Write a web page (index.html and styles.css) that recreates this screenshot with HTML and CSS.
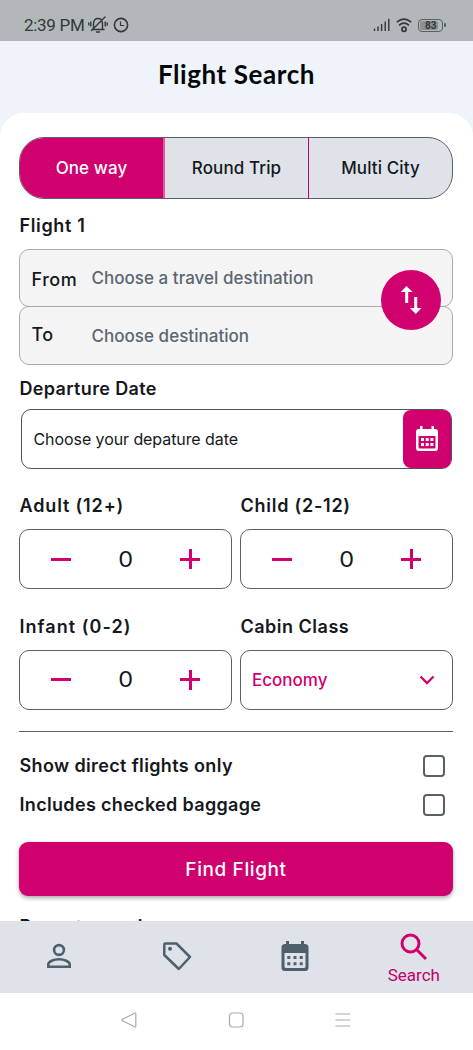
FILE: index.html
```html
<!DOCTYPE html>
<html lang="en">
<head>
<meta charset="utf-8">
<meta name="viewport" content="width=device-width, initial-scale=1">
<title>Flight Search</title>
<link rel="stylesheet" href="styles.css">
</head>
<body>
<div class="status">
  <span class="time">2:39 PM</span>
  <svg class="bell" width="20" height="18" viewBox="0 0 20 18" fill="none" stroke="#33383b" stroke-width="1.4" stroke-linecap="round"><path d="M4 13.5h12M5.5 13V7.5Q5.8 2.5 10 2.5q4.200 0 4.500 5V13M8.500 16h3M17 1 3.500 14.500M2.800 6v4M.8 7v2M17.200 6v4M19.200 7v2"/></svg>
  <svg class="clock" width="16" height="16" viewBox="0 0 16 16" fill="none" stroke="#33383b" stroke-width="1.6"><circle cx="8" cy="8" r="6.600"/><path d="M7.500 4.500V8.500H11" stroke-width="1.200"/></svg>
  <svg class="signal" width="18" height="14" viewBox="0 0 18 14" stroke="#33383b" stroke-width="1.400"><path d="M1.500 13v-2.500M5 13V8.500M8.600 13V6M12.200 13V3.500M15.800 13V.8"/></svg>
  <svg class="wifi" width="16" height="15" viewBox="0 0 16 15" fill="none" stroke="#33383b" stroke-width="1.700"><path d="M.8 4.200Q8-1.800 15.200 4.200M3 7.300Q8 3 13 7.300"/><circle cx="8" cy="11.300" r="2.100"/></svg>
  <span class="battery"><span class="charge">83</span></span>
</div>
<header class="header"><h1 class="title">Flight Search</h1></header>
<main class="sheet">
  <div class="tabs">
    <div class="tab active">One way</div>
    <div class="tab">Round Trip</div>
    <div class="tab last">Multi City</div>
  </div>
  <div class="label flight">Flight 1</div>
  <div class="route">
    <div class="place"><span class="end from">From</span><span class="hint">Choose a travel destination</span></div>
    <div class="place to"><span class="end">To</span><span class="hint">Choose destination</span></div>
    <div class="swap"><svg width="22" height="28" viewBox="0 0 22 28" fill="#fff"><path d="M6.500 0 12.500 6H8.200V17H5.200V6H.8ZM15.800 28 9.800 22H14.200V11H17.200V22H21.500Z"/></svg></div>
  </div>
  <div class="label departure">Departure Date</div>
  <div class="date"><span>Choose your depature date</span>
    <div class="pick"><svg width="24" height="26" viewBox="0 0 24 26" fill="#fff" fill-rule="evenodd"><path d="M5 0h2.500v3h9V0H19v3h1q3 0 3 3v16q0 3-3 3H4q-3 0-3-3V6q0-3 3-3h1ZM3.500 10v11q0 1.500 1.500 1.500h14q1.500 0 1.500-1.500V10Z"/><path d="M6 12h3v3H6Zm4.700 0h3v3h-3Zm4.700 0h3v3h-3ZM6 17h3v3H6Zm4.700 0h3v3h-3Zm4.700 0h3v3h-3Z"/></svg></div>
  </div>
  <div class="grid">
    <div class="field"><div class="label adult">Adult (12+)</div><div class="box"><i class="minus"></i><span class="num">0</span><i class="plus"></i></div></div>
    <div class="field"><div class="label child">Child (2-12)</div><div class="box"><i class="minus"></i><span class="num">0</span><i class="plus"></i></div></div>
    <div class="field"><div class="label infant">Infant (0-2)</div><div class="box"><i class="minus"></i><span class="num">0</span><i class="plus"></i></div></div>
    <div class="field"><div class="label cabin">Cabin Class</div><div class="box select"><span class="economy">Economy</span><svg width="16" height="10" viewBox="0 0 16 10" fill="none" stroke="#d0006f" stroke-width="2.300"><path d="m1.500 1.500 6.500 6.500 6.500-6.500"/></svg></div></div>
  </div>
  <div class="rule"></div>
  <div class="check"><span class="label direct">Show direct flights only</span><i class="tick"></i></div>
  <div class="check"><span class="label baggage">Includes checked baggage</span><i class="tick"></i></div>
  <div class="find"><span>Find Flight</span></div>
  <div class="label recent">Recent search</div>
</main>
<nav class="nav">
  <div class="item"><svg width="26" height="26" viewBox="0 0 26 26" fill="none" stroke="#4f606d" stroke-width="2.600"><circle cx="13" cy="7" r="4.900"/><path d="M2.300 23.700v-2.200C2.300 18.500 8 16.300 13 16.300s10.700 2.200 10.700 5.200v2.200Z"/></svg></div>
  <div class="item"><svg width="30" height="30" viewBox="0 0 30 30" fill="none" stroke="#4f606d" stroke-width="2.500" stroke-linejoin="round"><path d="M3.300 2.500H14.500L28 16 16.800 28 2.300 14V3.500q0-1 1-1Z"/><circle cx="8" cy="7.800" r="2" fill="#4f606d" stroke="none"/></svg></div>
  <div class="item"><svg width="28" height="32" viewBox="0 0 28 32" fill="#4f606d" fill-rule="evenodd"><path d="M5 1h3v3h12V1h3v3h1q3.500 0 3.500 3.500v20q0 3.500-3.500 3.500H4Q.5 31 .5 27.500v-20Q.5 4 4 4h1ZM3.500 13v13.500q0 1.500 1.500 1.500h18q1.500 0 1.500-1.500V13Z"/><path d="M6.300 16h3v3h-3Zm6.200 0h3v3h-3Zm6.200 0h3v3h-3ZM6.300 22.200h3v3h-3Zm6.200 0h3v3h-3Zm6.200 0h3v3h-3Z"/></svg></div>
  <div class="item on"><svg width="28" height="28" viewBox="0 0 28 28" fill="none" stroke="#d0006f" stroke-width="3"><circle cx="10.500" cy="10.500" r="8.500"/><path d="m16.500 16.500 9.500 9.500"/></svg><span>Search</span></div>
</nav>
<div class="system">
  <svg width="16" height="16" viewBox="0 0 16 16"><path d="M14.800 1.800v12.400q0 1.200-1.200.6L1.500 8.800q-1-.8 0-1.500L13.600 1.200q1.200-.6 1.200.6Z"/></svg>
  <svg width="16" height="16" viewBox="0 0 16 16"><rect x="1.500" y="1" width="13.500" height="14" rx="3"/></svg>
  <svg width="16" height="16" viewBox="0 0 16 16"><path d="M.5 2h15M.5 8h15M.5 14h15"/></svg>
</div>
</body>
</html>
```
FILE: styles.css
```css
* { box-sizing: border-box; }
body { margin: 0; width: 473px; height: 1050px; overflow: hidden; background: #eff3fa; color: #15181c; font-family: Inter, "Noto Sans", sans-serif; }
svg { display: block; flex: none; }
.status { height: 41px; background: #b2b7ba; color: #33383b; display: flex; align-items: center; padding: 9px 30px 0 24px; font: 17px/30px Roboto, sans-serif; }
.time { width: 64px; white-space: nowrap; letter-spacing: -.3px; }
.clock { margin-left: 5px; }
.signal { margin-left: auto; }
.wifi { margin-left: 5px; }
.battery { margin-left: 6px; width: 25px; height: 13px; border: 1.500px solid #5b6063; border-radius: 4px; padding: 1px; display: flex; position: relative; }
.battery::after { content: ""; position: absolute; right: -4px; top: 3px; width: 2px; height: 4px; background: #5b6063; border-radius: 1px; }
.charge { width: 18px; background: #8b9093; border-radius: 2px; font: bold 10px/9px Roboto, sans-serif; padding-left: 5px; }
.header { height: 72px; display: flex; justify-content: center; }
.title { margin: 0; font: 700 26px/67px Lato, sans-serif; letter-spacing: .58px; color: #05070a; white-space: nowrap; }
.sheet { height: 808px; overflow: hidden; background: #fff; border-radius: 24px 24px 0 0; padding: 24px 20px 0 19px; white-space: nowrap; }
.tabs { height: 62px; border: 1px solid #596067; border-radius: 25px; display: grid; grid-template-columns: 145px 144px 1fr; overflow: hidden; background: #dfe2e9; }
.tab { display: flex; align-items: center; justify-content: center; font-size: 17px; font-weight: 500; letter-spacing: .1px; border-right: 1px solid #d0006f; }
.tab.active { background: #d0006f; color: #fff; border-right: 2px solid #e05ca0; }
.tab.last { border: 0; }
.label { font-size: 18px; font-weight: 600; line-height: 24px; padding-left: .5px; }
.flight { padding-top: 15px; height: 50px; letter-spacing: .65px; }
.route { position: relative; height: 115px; }
.place { height: 58px; border: 1px solid #a7abae; border-radius: 10px; background: #f4f4f4; display: flex; align-items: center; padding-left: 11.500px; }
.place.to { margin-top: -1px; height: 59px; }
.end { width: 60px; font-size: 18px; font-weight: 500; letter-spacing: .5px; }
.from { padding-top: 3px; }
.to .end { padding-bottom: 3px; }
.hint { font-size: 17px; font-weight: 500; color: #5a6773; letter-spacing: .03px; }
.swap { position: absolute; right: 12px; top: 21px; width: 60px; height: 60px; border-radius: 50%; background: #d0006f; display: flex; align-items: center; justify-content: center; }
.departure { padding-top: 13px; height: 45px; letter-spacing: .35px; }
.date { margin: 0 1px 0 1.500px; height: 60px; border: 1px solid #4e555a; border-radius: 10px; display: flex; align-items: center; justify-content: space-between; padding-left: 12px; font-size: 16px; letter-spacing: -.08px; }
.pick { width: 48px; height: 58px; border-radius: 8px; background: #d0006f; display: flex; align-items: center; justify-content: center; }
.grid { margin-top: 24px; display: grid; grid-template-columns: 213px 213px; column-gap: 8px; row-gap: 24.500px; }
.field .label { height: 36px; padding-top: 1px; }
.adult { letter-spacing: .85px; }
.child { letter-spacing: .75px; }
.infant { letter-spacing: 1.050px; }
.cabin { letter-spacing: .5px; }
.direct { letter-spacing: .37px; }
.baggage { letter-spacing: .33px; }
.box { height: 60px; border: 1px solid #596067; border-radius: 10px; display: flex; align-items: center; justify-content: space-between; padding: 0 31px; }
.num { font-size: 21px; transform: scaleX(1.12); }
.minus, .plus { width: 20px; height: 20px; background: linear-gradient(#d0006f, #d0006f) center / 20px 3px no-repeat; }
.plus { background: linear-gradient(#d0006f, #d0006f) center / 20px 3px no-repeat, linear-gradient(#d0006f, #d0006f) center / 3px 20px no-repeat; }
.select { padding: 0 17px 0 11px; }
.economy { color: #d0006f; font-size: 17px; font-weight: 500; }
.rule { margin: 21.500px 0 15px; height: 1px; background: #596067; }
.check { height: 38.500px; display: flex; align-items: center; justify-content: space-between; padding-right: 8px; }
.tick { width: 22px; height: 22px; border: 2px solid #596067; border-radius: 4px; }
.find { margin-top: 18px; height: 54px; border-radius: 9px; background: #d0006f; color: #fff; display: flex; align-items: center; justify-content: center; font-size: 19px; font-weight: 500; letter-spacing: .6px; box-shadow: 0 2px 4px rgba(0,0,0,.35); }
.recent { padding-top: 19px; letter-spacing: .4px; }
.nav { height: 72px; background: #dfe2e9; display: grid; grid-template-columns: repeat(4, 1fr); }
.item { display: flex; justify-content: center; align-items: center; padding: 0 1px 3px 0; }
.on { flex-direction: column; justify-content: flex-start; padding: 12px 0 0; color: #c00068; font: 17px/24px Roboto, sans-serif; }
.on span { padding-top: 2px; }
.system { height: 57px; background: #fff; display: flex; justify-content: center; gap: 91px; padding: 19px 2px 0 0; }
.system svg { fill: none; stroke: #a9a9a9; stroke-width: 1.200; }
```
